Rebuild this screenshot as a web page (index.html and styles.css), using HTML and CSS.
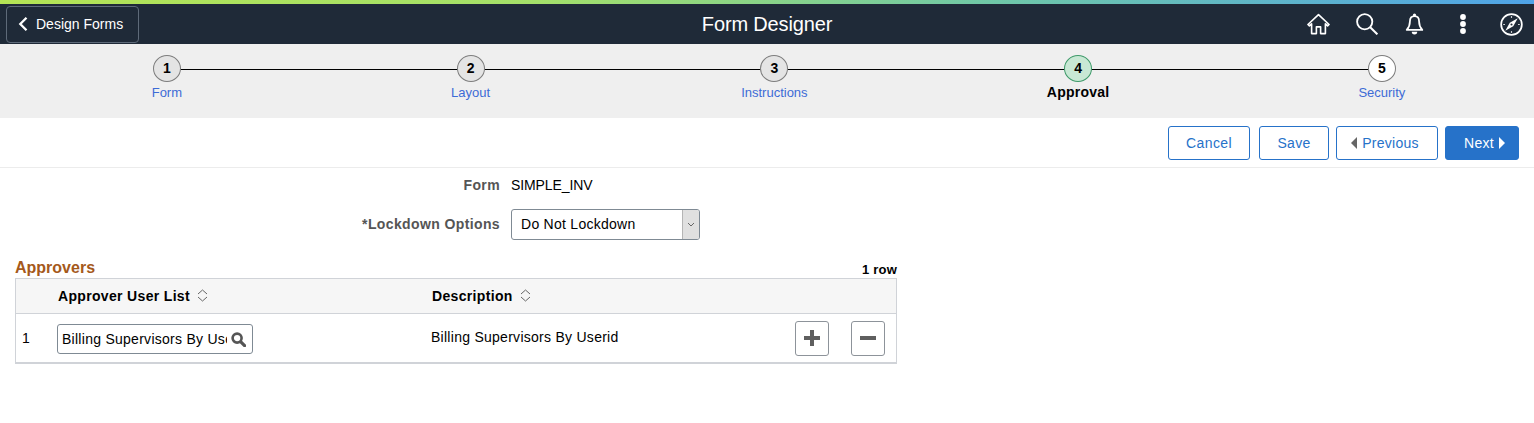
FILE: index.html
```html
<!DOCTYPE html>
<html lang="en">
<head>
<meta charset="utf-8">
<title>Form Designer</title>
<link rel="stylesheet" href="styles.css">
</head>
<body>
<div class="accent"></div>
<header class="banner">
  <div class="banner-left">
    <button class="back" type="button">
      <svg class="back-icon" viewBox="0 0 10 14" width="10" height="14"><path d="M8.500 .8 2.300 7l6.200 6.200" fill="none" stroke="#fff" stroke-width="2.300"/></svg>
      <span>Design Forms</span>
    </button>
  </div>
  <h1 class="title">Form Designer</h1>
  <div class="tools">
    <svg class="tool tool-home" viewBox="0 0 24 22" width="23" height="22"><path d="M1 11.500 12 1.200l11 10.300-1.500 1.500-2.300-2.100V21h-5v-7h-4.400v7h-5V10.900L2.500 13z" fill="none" stroke="#fff" stroke-width="1.700" stroke-linejoin="round"/></svg>
    <svg class="tool tool-search" viewBox="0 0 24 24" width="22" height="22"><circle cx="9.500" cy="9.500" r="8.300" fill="none" stroke="#fff" stroke-width="2"/><path d="m15.500 15.500 7.800 7.800" stroke="#fff" stroke-width="2.200"/></svg>
    <svg class="tool tool-bell" viewBox="0 0 20 24" width="19" height="22"><path d="M10 3.500c-3.500 0-5 2.700-5 5.800 0 4-1 6.500-3.500 9.200h17C16 15.800 15 13.300 15 9.300c0-3.100-1.500-5.800-5-5.800z" fill="none" stroke="#fff" stroke-width="1.900" stroke-linejoin="round"/><circle cx="10" cy="2.200" r="1.700" fill="#fff"/><path d="M7 20.500a3 3 0 0 0 6 0z" fill="#fff"/></svg>
    <svg class="tool tool-dots" viewBox="0 0 6 20" width="6" height="20"><circle cx="3" cy="3" r="2.900" fill="#fff"/><circle cx="3" cy="10" r="2.900" fill="#fff"/><circle cx="3" cy="17" r="2.900" fill="#fff"/></svg>
    <svg class="tool tool-compass" viewBox="0 0 24 24" width="23" height="23"><circle cx="12" cy="12" r="10.800" fill="none" stroke="#fff" stroke-width="1.800"/><path d="M18.500 5.500 13.800 13.800 5.500 18.500 10.200 10.200z" fill="#fff"/><circle cx="12" cy="12" r="1.100" fill="#1f2a38"/><path d="M12 3.500v1.500M12 19v1.500M3.500 12H5M19 12h1.500" stroke="#fff" stroke-width="1.200"/></svg>
  </div>
</header>
<nav class="train">
  <div class="step"><span class="num">1</span><a class="step-label">Form</a></div>
  <div class="step"><span class="num">2</span><a class="step-label">Layout</a></div>
  <div class="step"><span class="num">3</span><a class="step-label">Instructions</a></div>
  <div class="step step-active"><span class="num">4</span><a class="step-label">Approval</a></div>
  <div class="step step-next"><span class="num">5</span><a class="step-label">Security</a></div>
</nav>
<div class="actions">
  <button class="btn btn-cancel" type="button">Cancel</button>
  <button class="btn btn-save" type="button">Save</button>
  <button class="btn btn-prev" type="button"><span class="tri tri-left"></span>Previous</button>
  <button class="btn btn-primary" type="button">Next<span class="tri tri-right"></span></button>
</div>
<main class="content">
  <div class="field field-form">
    <span class="label">Form</span>
    <span class="value">SIMPLE_INV</span>
  </div>
  <div class="field field-lock">
    <span class="label">*Lockdown Options</span>
    <div class="select">
      <span class="select-text">Do Not Lockdown</span>
      <span class="select-arrow"><svg viewBox="0 0 8 5" width="8" height="5"><path d="m1 1 3 3 3-3" fill="none" stroke="#666" stroke-width="1"/></svg></span>
    </div>
  </div>
  <section class="grid-wrap">
    <div class="grid-head">
      <h2 class="grid-title">Approvers</h2>
      <span class="grid-count">1 row</span>
    </div>
    <div class="grid">
      <div class="grid-row grid-row-head">
        <div></div>
        <div class="th">Approver User List<svg class="sort" viewBox="0 0 11 13" width="11" height="13"><path d="M1 5 5.500 1 10 5M1 8l4.500 4L10 8" fill="none" stroke="#666" stroke-width="1"/></svg></div>
        <div class="th">Description<svg class="sort" viewBox="0 0 11 13" width="11" height="13"><path d="M1 5 5.500 1 10 5M1 8l4.500 4L10 8" fill="none" stroke="#666" stroke-width="1"/></svg></div>
      </div>
      <div class="grid-row grid-row-body">
        <div class="rownum">1</div>
        <div class="lookup">
          <span class="lookup-text">Billing Supervisors By Userid</span>
          <svg class="lookup-icon" viewBox="0 0 16 16" width="15" height="15"><circle cx="6.500" cy="6.500" r="4.800" fill="none" stroke="#555" stroke-width="2.800"/><path d="m10.500 10.500 4 4" stroke="#555" stroke-width="3.400" stroke-linecap="round"/></svg>
        </div>
        <div class="desc">Billing Supervisors By Userid</div>
        <div class="row-btns">
          <button class="icon-btn" type="button"><svg viewBox="0 0 16 16" width="16" height="16"><path d="M8 0v16M0 8h16" stroke="#5f5f5f" stroke-width="4"/></svg></button>
          <button class="icon-btn" type="button"><svg viewBox="0 0 16 16" width="16" height="16"><path d="M0 8h16" stroke="#5f5f5f" stroke-width="4"/></svg></button>
        </div>
      </div>
    </div>
  </section>
</main>
</body>
</html>
```

FILE: styles.css
```css
* { box-sizing: border-box; }
html, body { margin: 0; padding: 0; }
body {
  font-family: "Liberation Sans", Arial, sans-serif;
  font-size: 14px;
  color: #000;
  background: #fff;
  height: 423px;
  overflow: hidden;
}
button { font-family: inherit; cursor: pointer; }

.accent {
  height: 4px;
  background: linear-gradient(90deg, #b4e455 0%, #a4e06a 35%, #6fc7a8 65%, #4fa3e8 100%);
}
.banner {
  height: 40px;
  background: #1f2a38;
  display: grid;
  grid-template-columns: 1fr auto 1fr;
  align-items: center;
}
.banner-left { padding-left: 6px; }
.back {
  width: 133px;
  height: 37px;
  display: flex;
  align-items: center;
  gap: 8px;
  padding: 0 0 0 11px;
  color: #fff;
  font-size: 14px;
  background: #1f2a38;
  border: 1px solid #5e6a79;
  border-radius: 4px;
}
.title {
  margin: 0;
  font-size: 20px;
  font-weight: 400;
  letter-spacing: -0.15px;
  color: #fff;
}
.tools {
  display: flex;
  align-items: center;
  justify-content: flex-end;
  padding-right: 11px;
}
.tool { display: block; }
.tool-home { margin-right: 26px; }
.tool-search { margin-right: 27px; }
.tool-bell { margin-right: 36px; }
.tool-dots { margin-right: 34px; }

.train {
  height: 74px;
  background: #efefef;
  display: grid;
  grid-template-columns: repeat(5, 303.75px);
  padding-left: 15px;
}
.step {
  position: relative;
  display: flex;
  flex-direction: column;
  align-items: center;
  padding-top: 11px;
}
.step:not(:last-child)::after {
  content: "";
  position: absolute;
  left: 50%;
  top: 24.500px;
  width: 100%;
  height: 1.500px;
  background: #000;
}
.num {
  position: relative;
  z-index: 1;
  width: 28px;
  height: 27px;
  border-radius: 50%;
  border: 1px solid #7d7d7d;
  background: #e4e4e4;
  color: #000;
  font-weight: 700;
  font-size: 14px;
  line-height: 25px;
  text-align: center;
}
.step-label {
  margin-top: 3px;
  font-size: 13px;
  line-height: 16px;
  color: #3d6bd6;
}
.step-active .num { background: #c8e8d4; border-color: #3f9a6a; }
.step-active .step-label {
  margin-top: 2px;
  color: #000;
  font-weight: 700;
  font-size: 14px;
  letter-spacing: 0.25px;
}
.step-next .num { background: #fff; }

.actions {
  height: 50px;
  border-bottom: 1px solid #ececec;
  display: flex;
  justify-content: flex-end;
  align-items: flex-start;
  gap: 9px;
  padding: 8px 15px 0 0;
}
.btn {
  height: 34px;
  padding: 0;
  font-size: 14px;
  letter-spacing: 0.25px;
  color: #2672c9;
  background: #fff;
  border: 1px solid #2672c9;
  border-radius: 3px;
  display: flex;
  align-items: center;
  justify-content: center;
}
.btn-cancel { width: 82px; letter-spacing: 0.4px; }
.btn-save { width: 70px; margin-right: -2px; }
.btn-prev { width: 102px; margin-right: -2px; padding-right: 4px; }
.btn-primary { width: 74px; padding-left: 5px; background: #2672c9; color: #fff; }
.tri {
  display: inline-block;
  width: 0;
  height: 0;
  border-top: 6px solid transparent;
  border-bottom: 6px solid transparent;
}
.tri-left { border-right: 6px solid #666; margin-right: 5px; }
.tri-right { border-left: 6px solid #fff; margin-left: 5px; }

.content { padding-left: 15px; }
.field {
  display: grid;
  grid-template-columns: 485px auto;
  column-gap: 11px;
  align-items: center;
  justify-items: start;
}
.field-form { height: 34px; }
.field-lock { height: 34px; margin-top: 5px; }
.label {
  justify-self: end;
  font-weight: 700;
  letter-spacing: 0.38px;
  color: #555;
}
.value { color: #000; letter-spacing: -0.1px; }
.select {
  width: 189px;
  height: 31px;
  display: flex;
  align-items: stretch;
  background: #fff;
  border: 1px solid #7f8a94;
  border-radius: 3px;
  overflow: hidden;
}
.select-text {
  flex: 1;
  padding-left: 9px;
  line-height: 28px;
  letter-spacing: 0.27px;
}
.select-arrow {
  width: 17px;
  background: #e0e0e0;
  border-left: 1px solid #b5b5b5;
  display: flex;
  align-items: center;
  justify-content: center;
}

.grid-wrap { width: 882px; margin-top: 17px; }
.grid-head {
  height: 20px;
  display: flex;
  justify-content: space-between;
  align-items: center;
}
.grid-title {
  margin: 0;
  font-size: 16px;
  font-weight: 700;
  color: #a5591b;
}
.grid-count {
  font-size: 13px;
  font-weight: 700;
  letter-spacing: 0.2px;
  color: #000;
  margin-top: 3px;
}
.grid {
  border: 1px solid #d0d3d8;
  border-bottom-width: 2px;
}
.grid-row {
  display: grid;
  grid-template-columns: 41px 374px 1fr auto;
  align-items: center;
}
.grid-row-head {
  height: 35px;
  background: #f6f6f6;
  border-bottom: 1px solid #d0d3d8;
}
.grid-row-body { height: 48px; }
.th {
  display: flex;
  align-items: center;
  gap: 7px;
  font-weight: 700;
  letter-spacing: 0.33px;
  padding-left: 1px;
}
.sort { margin-top: -1px; }
.rownum { padding-left: 6px; margin-top: -1px; }
.lookup {
  width: 196px;
  height: 30px;
  display: flex;
  align-items: center;
  border: 1px solid #7f8a94;
  border-radius: 3px;
  padding: 0 6px 0 4px;
  margin-top: 2px;
}
.lookup-text {
  flex: 1;
  min-width: 0;
  overflow: hidden;
  white-space: nowrap;
  letter-spacing: 0.27px;
}
.lookup-icon { margin-left: 4px; flex: none; }
.desc { margin-top: -3px; letter-spacing: 0.27px; }
.row-btns {
  display: flex;
  gap: 22px;
  padding-right: 11px;
}
.icon-btn {
  width: 34px;
  height: 35px;
  padding: 0;
  background: #fff;
  border: 1px solid #8d939a;
  border-radius: 3px;
  display: flex;
  align-items: center;
  justify-content: center;
}
```
